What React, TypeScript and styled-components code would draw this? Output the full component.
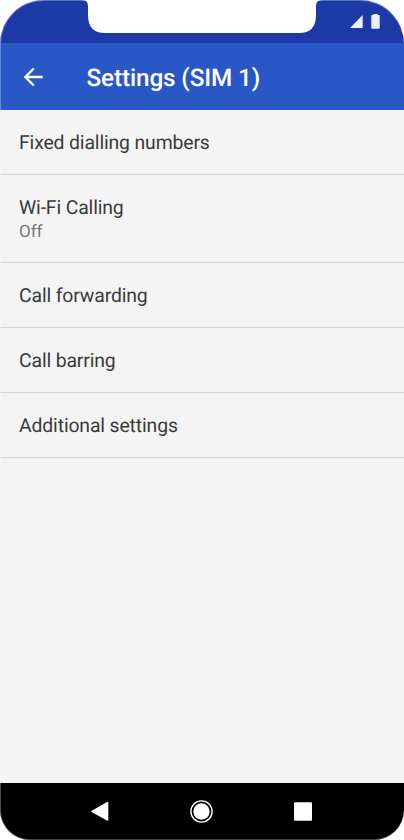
import React from 'react';
import styled, { createGlobalStyle } from 'styled-components';

const GlobalStyle = createGlobalStyle`
  body { margin: 0; background: #fff; font-family: Roboto, sans-serif; }
  * { box-sizing: border-box; }
`;

const Phone = styled.main`
  position: relative;
  display: flex;
  flex-direction: column;
  width: 404px;
  height: 840px;
  overflow: hidden;
  border-radius: 44px 44px 30px 30px;
  background: #f4f4f4;

  &::after {
    content: '';
    position: absolute;
    inset: 0;
    border-radius: inherit;
    box-shadow: inset 1px 0 rgba(255, 255, 255, 0.3), inset 0 1px rgba(255, 255, 255, 0.3), inset 0 -1px rgba(255, 255, 255, 0.28);
    pointer-events: none;
  }
`;

const StatusBar = styled.div`
  position: relative;
  display: flex;
  justify-content: flex-end;
  height: 43px;
  background: #1c39a8;
`;

const Notch = styled.svg`
  position: absolute;
  left: 80px;
  top: 0;
`;

const StatusIcons = styled.svg`
  margin: 12px 22px 0 0;
`;

const AppBar = styled.header`
  display: flex;
  align-items: center;
  height: 67px;
  padding-left: 19px;
  gap: 39.500px;
  background: #2a57c6;
  color: #fff;
`;

const BackButton = styled.button`
  display: flex;
  padding: 0;
  border: 0;
  background: none;
`;

const Title = styled.h1`
  margin: 2px 0 0;
  font-size: 24.3px;
  font-weight: 500;
  line-height: 28px;
  letter-spacing: -0.12px;
  white-space: nowrap;
  text-rendering: geometricPrecision;
`;

const List = styled.ul`
  flex: 1;
  margin: 0;
  padding: 0;
  list-style: none;
`;

const Row = styled.li<{ $tall?: boolean }>`
  display: flex;
  flex-direction: column;
  justify-content: center;
  height: ${p => (p.$tall ? 88 : 65)}px;
  padding-left: 19px;
  border-bottom: 1px solid #d3d3d3;
`;

const Label = styled.span`
  color: #3a3a3a;
  font-size: 19.4px;
  line-height: 25px;
  letter-spacing: -0.14px;
  text-rendering: geometricPrecision;
`;

const Detail = styled.span`
  color: #777;
  font-size: 17px;
  line-height: 22px;
  padding-top: 1px;
  text-rendering: geometricPrecision;
`;

const NavBar = styled.nav`
  height: 57px;
  background: #000;
`;

const items = [
  { label: 'Fixed dialling numbers' },
  { label: 'Wi-Fi Calling', detail: 'Off' },
  { label: 'Call forwarding' },
  { label: 'Call barring' },
  { label: 'Additional settings' },
];

export default function App() {
  return (
    <>
      <GlobalStyle />
      <Phone>
        <StatusBar>
          <Notch width="244" height="34" viewBox="0 0 244 34">
            <path d="M2 0H242Q236 0 236 6V15Q236 33 219 33H25Q8 33 8 15V6Q8 0 2 0Z" fill="#fff" />
          </Notch>
          <StatusIcons width="34" height="18" viewBox="0 0 34 18" fill="#eeeff9">
            <path d="M2 16H14.700V3Z" />
            <path d="M23.300 3.500Q23.300 3 24 3H25.500V2H29.500V3H31Q31.700 3 31.700 3.700V16Q31.700 16.700 31 16.700H24Q23.300 16.700 23.300 16Z" />
          </StatusIcons>
        </StatusBar>
        <AppBar>
          <BackButton aria-label="Back">
            <svg width="28" height="28" viewBox="0 0 24 24" fill="#fff">
              <path d="M20.300 11H7.830l5.590-5.590L12 4l-8 8 8 8 1.410-1.410L7.830 13H20.300v-2z" />
            </svg>
          </BackButton>
          <Title>Settings (SIM 1)</Title>
        </AppBar>
        <List>
          {items.map(({ label, detail }) => (
            <Row key={label} $tall={!!detail}>
              <Label>{label}</Label>
              {detail && <Detail>{detail}</Detail>}
            </Row>
          ))}
        </List>
        <NavBar>
          <svg width="404" height="57" viewBox="0 0 404 57" fill="#fff">
            <path d="M91.300 28L107 19Q108.300 18.500 108.300 19.500V37Q108.300 38 107 37.500L91.500 29Q91 28.500 91.300 28Z" />
            <circle cx="201.500" cy="28.500" r="8.200" />
            <circle cx="201.500" cy="28.500" r="10.600" fill="none" stroke="#fff" strokeWidth="1.400" />
            <rect x="294" y="19.300" width="18" height="18.400" rx="1" />
          </svg>
        </NavBar>
      </Phone>
    </>
  );
}
